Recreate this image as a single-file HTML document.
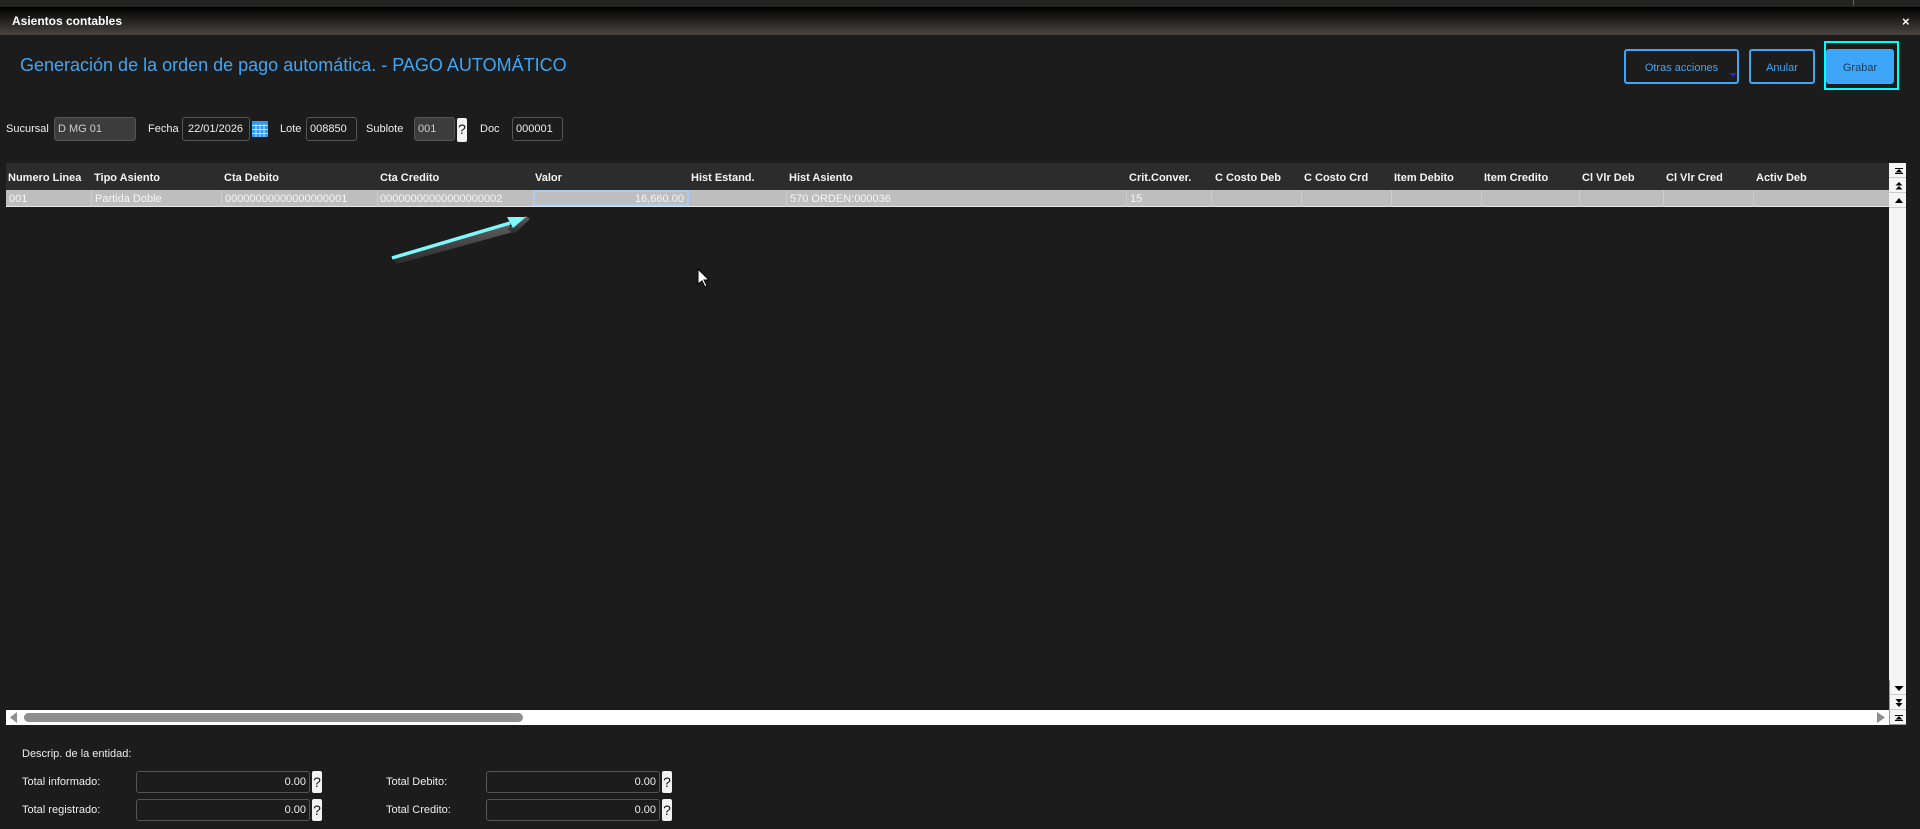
<!DOCTYPE html>
<html lang="es"><head><meta charset="utf-8"><title>Asientos contables</title>
<style>
html,body{margin:0;padding:0;width:1920px;height:829px;overflow:hidden;background:#1c1c1c;font-family:"Liberation Sans",Arial,sans-serif;color:#fff}
.a{position:absolute;white-space:nowrap}
.l{position:absolute;white-space:nowrap;font-size:11px;line-height:14px;color:#eee}
.i{position:absolute;box-sizing:border-box;border:1px solid #555;border-radius:3px;font-size:11px;color:#eee;padding:0 3px;display:flex;align-items:center;white-space:nowrap}
.d{background:#3c3c3c;color:#ccc}
.r{justify-content:flex-end}
.q{position:absolute;box-sizing:border-box;background:#f2f2f2;color:#111;border-radius:2px;font-size:14px;line-height:22px;text-align:center;width:10px}
.h{position:absolute;top:171px;font-size:11px;font-weight:bold;line-height:14px;color:#f4f4f4;white-space:nowrap}
.c{position:absolute;top:192px;font-size:11px;line-height:14px;color:#f6f6f6;white-space:nowrap}
.s{position:absolute;top:190px;width:1px;height:17px;background:#cdcdcd}
.b{position:absolute;box-sizing:border-box;border:2px solid #3ea6f8;border-radius:3px;color:#3ea6f8;font-size:11px;display:flex;align-items:center;justify-content:center;padding-top:2px}
.sb{position:absolute;left:1889px;width:17px;height:15px;box-sizing:border-box;background:#f5f5f5;border-bottom:1px solid #ccc}
</style></head><body>
<div class="a" style="left:0;top:0;width:1920px;height:7px;background:#232323"></div>
<div class="a" style="left:1853px;top:0;width:1px;height:5px;background:#666"></div>
<div class="a" style="left:0;top:7px;width:1920px;height:28px;background:linear-gradient(#000,#4a4541)"></div>
<div class="a" style="left:12px;top:14px;font-size:12px;font-weight:bold;line-height:14px">Asientos contables</div>
<div class="a" style="left:1902px;top:14px;font-size:13px;font-weight:bold;line-height:16px">×</div>
<div class="a" style="left:20px;top:54px;font-size:18px;line-height:22px;color:#3ea6f8">Generación de la orden de pago automática. - PAGO AUTOMÁTICO</div>

<div class="b" style="left:1624px;top:49px;width:115px;height:35px">Otras acciones</div>
<svg class="a" style="left:1729px;top:73px" width="8" height="5"><path d="M0 0h8L4 4z" fill="#2222dd"/></svg>
<div class="b" style="left:1749px;top:49px;width:66px;height:35px">Anular</div>
<div class="b" style="left:1826px;top:49px;width:68px;height:35px;background:#3ea6f8;color:#1c3a58">Grabar</div>
<div class="a" style="left:1824px;top:41px;width:75px;height:49px;box-sizing:border-box;border:2px solid #0ff"></div>

<div class="l" style="left:6px;top:122px">Sucursal</div>
<div class="i d" style="left:54px;top:117px;width:82px;height:24px">D MG 01</div>
<div class="l" style="left:148px;top:122px">Fecha</div>
<div class="i" style="left:182px;top:117px;width:68px;height:24px;padding:0 5px">22/01/2026</div>
<svg class="a" style="left:252px;top:121px" width="16" height="16"><rect width="16" height="16" fill="#2b9bf4"/><path d="M0 4.500h16M0 8.500h16M0 12.500h16M4 3v13M8 3v13M12 3v13" stroke="#bfe2fd" stroke-width="1"/></svg>
<div class="l" style="left:280px;top:122px">Lote</div>
<div class="i" style="left:306px;top:117px;width:51px;height:24px">008850</div>
<div class="l" style="left:366px;top:122px">Sublote</div>
<div class="i d" style="left:414px;top:117px;width:41px;height:24px">001</div>
<div class="q" style="left:457px;top:118px;height:24px">?</div>
<div class="l" style="left:480px;top:122px">Doc</div>
<div class="i" style="left:512px;top:117px;width:51px;height:24px">000001</div>

<div class="a" style="left:6px;top:163px;width:1883px;height:27px;background:#2c2c2c"></div>
<div class="h" style="left:8px">Numero Linea</div>
<div class="h" style="left:94px">Tipo Asiento</div>
<div class="h" style="left:224px">Cta Debito</div>
<div class="h" style="left:380px">Cta Credito</div>
<div class="h" style="left:535px">Valor</div>
<div class="h" style="left:691px">Hist Estand.</div>
<div class="h" style="left:789px">Hist Asiento</div>
<div class="h" style="left:1129px">Crit.Conver.</div>
<div class="h" style="left:1215px">C Costo Deb</div>
<div class="h" style="left:1304px">C Costo Crd</div>
<div class="h" style="left:1394px">Item Debito</div>
<div class="h" style="left:1484px">Item Credito</div>
<div class="h" style="left:1582px">Cl Vlr Deb</div>
<div class="h" style="left:1666px">Cl Vlr Cred</div>
<div class="h" style="left:1756px">Activ Deb</div>

<div class="a" style="left:6px;top:190px;width:1883px;height:17px;background:#bebebe"></div>
<div class="a" style="left:6px;top:206px;width:1883px;height:1px;background:#e6e6e6"></div>
<div class="s" style="left:91px"></div><div class="s" style="left:221px"></div><div class="s" style="left:377px"></div><div class="s" style="left:786px"></div><div class="s" style="left:1126px"></div><div class="s" style="left:1211px"></div><div class="s" style="left:1301px"></div><div class="s" style="left:1391px"></div><div class="s" style="left:1481px"></div><div class="s" style="left:1579px"></div><div class="s" style="left:1663px"></div><div class="s" style="left:1753px"></div>
<div class="a" style="left:533px;top:190px;width:156px;height:16px;box-sizing:border-box;border:2px solid #a9cdf5"></div>
<div class="c" style="left:9px">001</div>
<div class="c" style="left:95px">Partida Doble</div>
<div class="c" style="left:225px">00000000000000000001</div>
<div class="c" style="left:380px">00000000000000000002</div>
<div class="c" style="left:635px">16,660.00</div>
<div class="c" style="left:790px">570 ORDEN:000036</div>
<div class="c" style="left:1130px">15</div>

<svg class="a" style="left:385px;top:205px" width="150" height="65">
<defs><linearGradient id="g" x1="0" y1="0" x2=".12" y2="1"><stop offset="0" stop-color="#666"/><stop offset="1" stop-color="#2a2a2a"/></linearGradient></defs>
<path d="M7 53L124 19l4 8L12 59z" fill="url(#g)"/>
<path d="M122 24l19-13 4 3-16 15z" fill="url(#g)"/>
<path d="M7 53L125 18" stroke="#7ff7fb" stroke-width="3.500"/>
<path d="M122 12h19L128 23z" fill="#7ff7fb"/>
</svg>
<svg class="a" style="left:697px;top:268px" width="13" height="20"><path d="M1 1v15l4-3 3 6 2-1-3-6h5z" fill="#fff" stroke="#000" stroke-width="1"/></svg>

<div class="a" style="left:1889px;top:163px;width:17px;height:562px;background:#f5f5f5"></div>
<div class="sb" style="top:163px"></div><div class="sb" style="top:178px"></div><div class="sb" style="top:193px"></div>
<svg class="a" style="left:1889px;top:163px" width="17" height="45" fill="#000"><path d="M6 5h8v1H6zM10 6l3.500 3.500h-7zM6 10h8v1H6zM10 19l3.500 3.500h-7zM10 23l3.500 3.500h-7zM10 35l4 5H6z"/></svg>
<div class="sb" style="top:680px"></div><div class="sb" style="top:695px"></div><div class="sb" style="top:710px;border-bottom:1px solid #999"></div>
<svg class="a" style="left:1889px;top:680px" width="17" height="45" fill="#000"><path d="M5.500 6h9L10 11zM6.500 19h7L10 23zM6.500 23h7L10 27zM6 35h8v1H6zM10 36l3.500 3.500h-7zM6 40h8v1H6z"/></svg>
<div class="a" style="left:1889px;top:680px;width:1px;height:45px;background:#999"></div>
<div class="a" style="left:6px;top:710px;width:1883px;height:15px;background:#fff"></div>
<div class="a" style="left:24px;top:713px;width:499px;height:9px;border-radius:5px;background:#8e8e8e"></div>
<svg class="a" style="left:9px;top:712px" width="9" height="12"><path d="M8 0v11L1 5.500z" fill="#8e8e8e"/></svg>
<svg class="a" style="left:1877px;top:712px" width="9" height="12"><path d="M0 0v11l8-5.500z" fill="#8e8e8e"/></svg>

<div class="l" style="left:22px;top:747px">Descrip. de la entidad:</div>
<div class="l" style="left:22px;top:775px">Total informado:</div>
<div class="i r" style="left:136px;top:771px;width:174px;height:22px">0.00</div>
<div class="q" style="left:312px;top:771px;height:22px">?</div>
<div class="l" style="left:386px;top:775px">Total Debito:</div>
<div class="i r" style="left:486px;top:771px;width:174px;height:22px">0.00</div>
<div class="q" style="left:662px;top:771px;height:22px">?</div>
<div class="l" style="left:22px;top:803px">Total registrado:</div>
<div class="i r" style="left:136px;top:799px;width:174px;height:22px">0.00</div>
<div class="q" style="left:312px;top:799px;height:22px">?</div>
<div class="l" style="left:386px;top:803px">Total Credito:</div>
<div class="i r" style="left:486px;top:799px;width:174px;height:22px">0.00</div>
<div class="q" style="left:662px;top:799px;height:22px">?</div>
</body></html>
